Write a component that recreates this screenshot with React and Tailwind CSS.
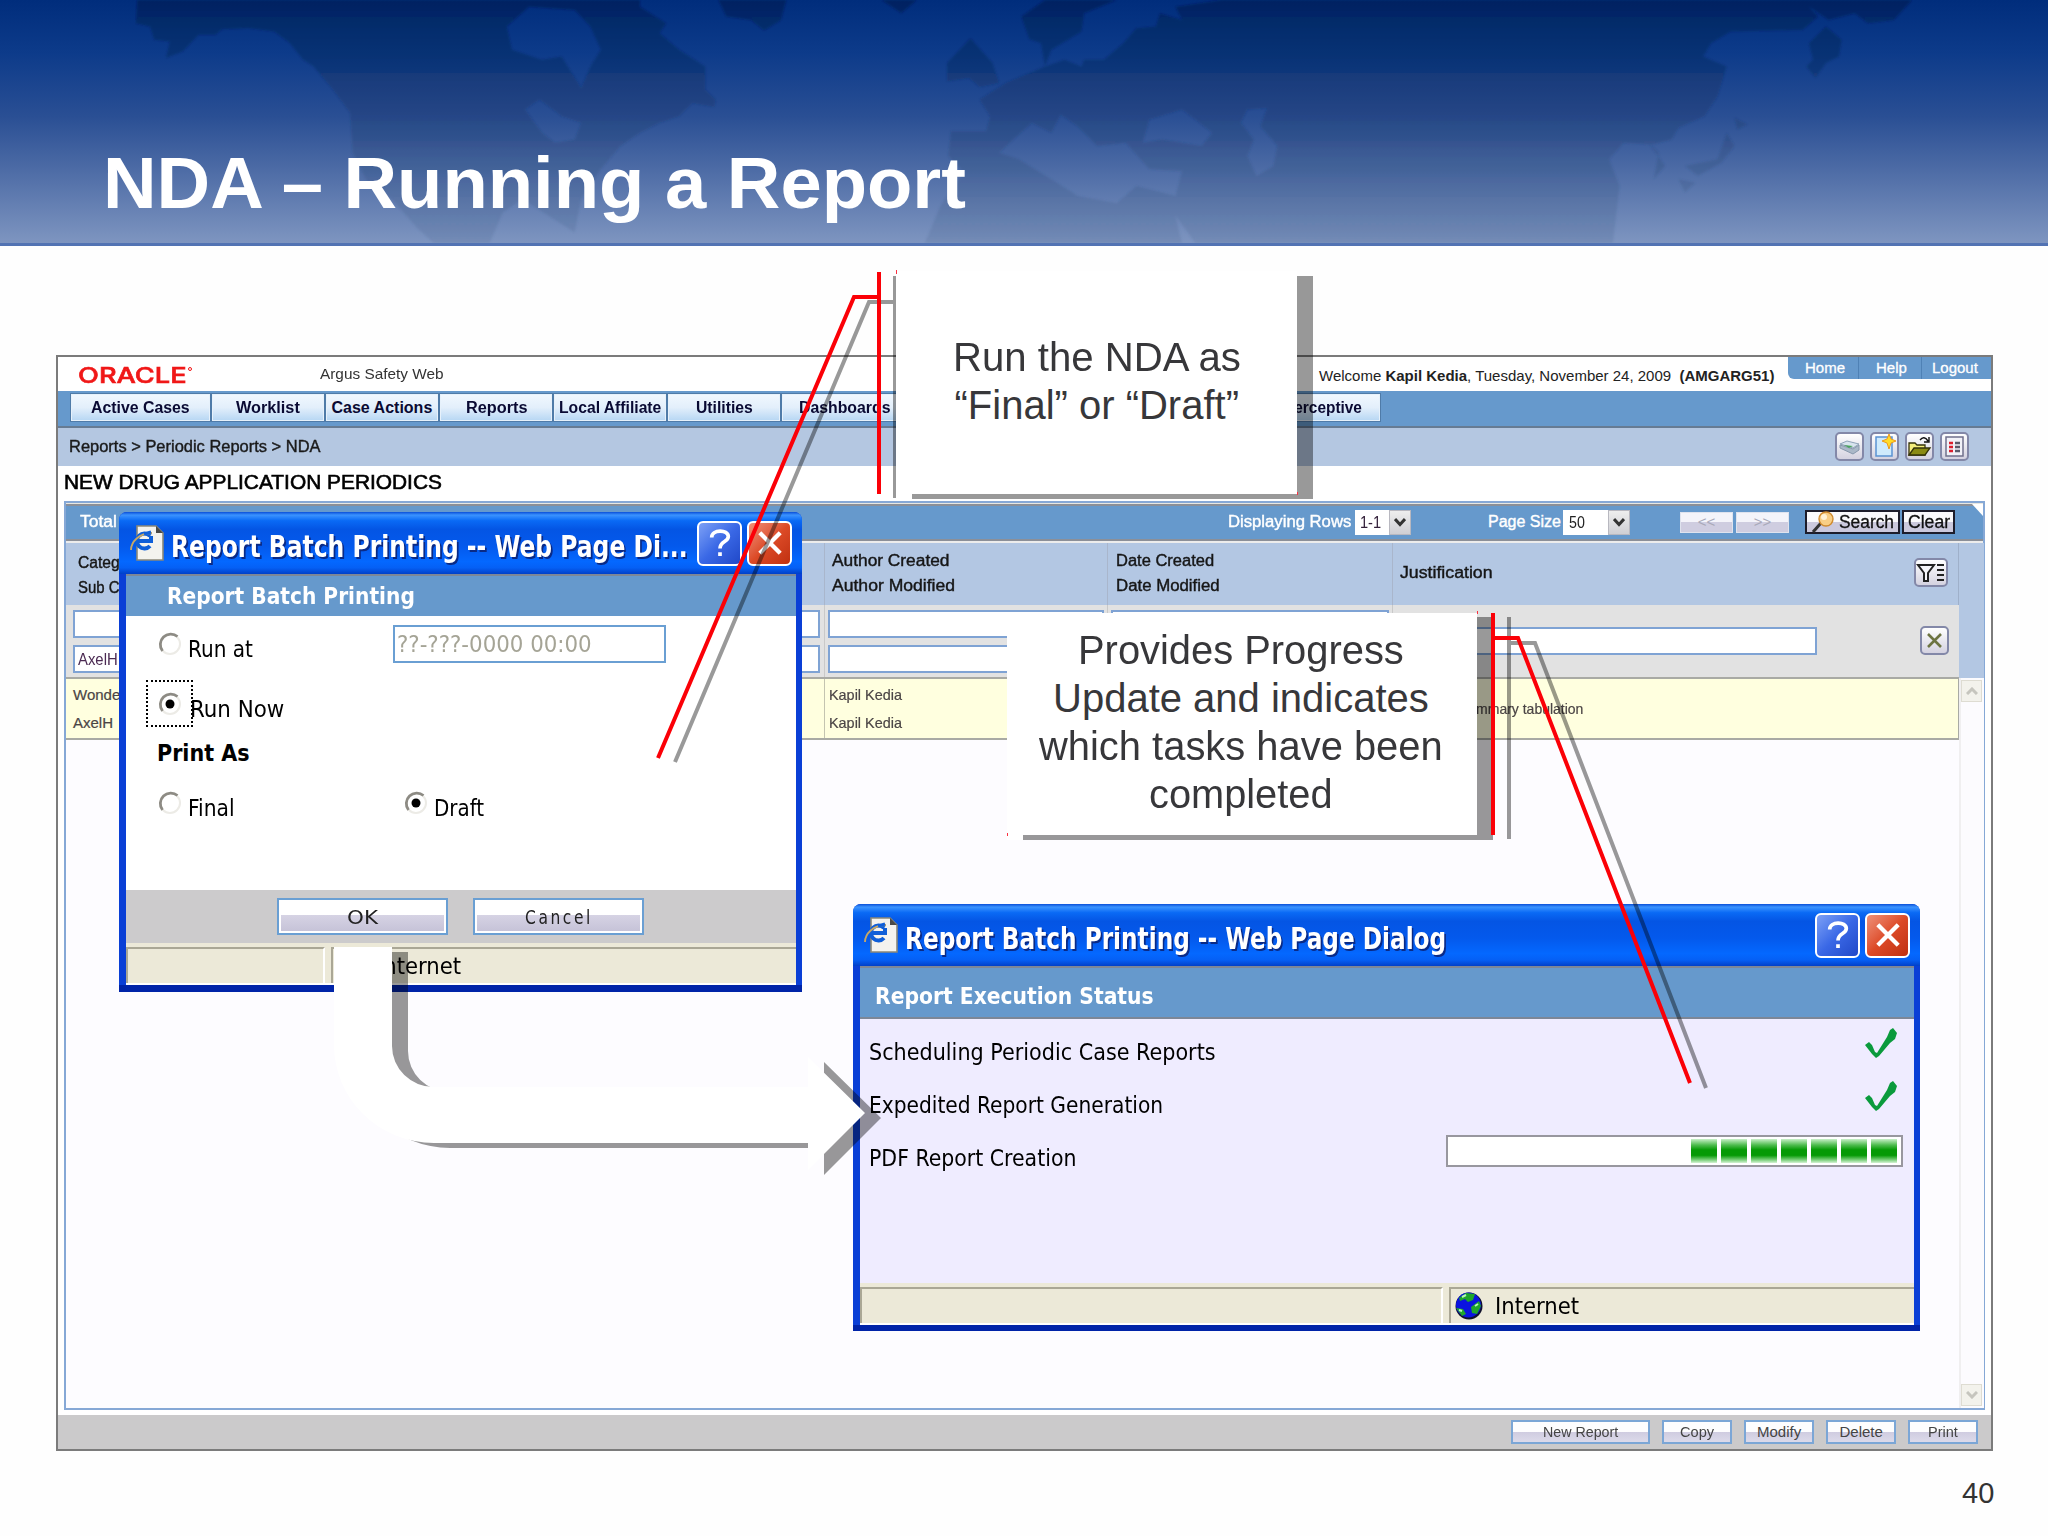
import React, { useLayoutEffect, useRef, useState } from "react";

// Single line label, squeezed or stretched to the width of its box
function Fit({ className = "", children }) {
  const box = useRef(null);
  const text = useRef(null);
  const [scale, setScale] = useState(1);

  useLayoutEffect(() => {
    setScale(box.current.clientWidth / text.current.offsetWidth);
  }, [children]);

  return (
    <span ref={box} className={`block shrink-0 ${className}`}>
      <span
        ref={text}
        className="inline-block whitespace-nowrap origin-left"
        style={{ transform: `scaleX(${scale})` }}
      >
        {children}
      </span>
    </span>
  );
}

const MENU = [
  { label: "Active Cases", box: "w-[139px]", text: "w-[99px]" },
  { label: "Worklist", box: "w-[112px]", text: "w-[64px]" },
  { label: "Case Actions", box: "w-[112px]", text: "w-[101px]" },
  { label: "Reports", box: "w-[112px]", text: "w-[61px]" },
  { label: "Local Affiliate", box: "w-[112px]", text: "w-[102px]" },
  { label: "Utilities", box: "w-[112px]", text: "w-[57px]" },
  { label: "Dashboards", box: "w-[124px]", text: "w-[91px]" },
];

const ACTIONS = [
  { label: "New Report", box: "w-[139px]", text: "w-[75px]" },
  { label: "Copy", box: "w-[70px]", text: "w-[34px]" },
  { label: "Modify", box: "w-[70px]", text: "w-[44px]" },
  { label: "Delete", box: "w-[70px]", text: "w-[43px]" },
  { label: "Print", box: "w-[70px]", text: "w-[30px]" },
];

/* =============================
   Banner
============================== */
function Banner() {
  return (
    <header className="relative h-[246px] border-b-[3px] border-[#5273b3] bg-[linear-gradient(180deg,#002d7c_0%,#0d3b8a_22%,#2a4f94_48%,#4a69a4_68%,#7e95c0_100%)]">
      <svg className="absolute inset-0 w-full h-full" viewBox="0 0 1568 732" preserveAspectRatio="none">
        <defs>
          <linearGradient id="land" x1="0" y1="0" x2="0" y2="732" gradientUnits="userSpaceOnUse">
            <stop offset="0" stopColor="#001848" stopOpacity="0.5" />
            <stop offset="0.5" stopColor="#1c3a6c" stopOpacity="0.33" />
            <stop offset="1" stopColor="#54709a" stopOpacity="0.25" />
          </linearGradient>
          <filter id="soft" x="0" y="0" width="100%" height="100%">
            <feGaussianBlur stdDeviation="1 3" />
          </filter>
        </defs>
        <g fill="url(#land)" fillRule="evenodd" filter="url(#soft)">
          <path d="M105 0L104 70L115 80L118 120L130 125L127 175L140 155L152 105L165 105L170 88L190 84L210 95L222 130L232 180L240 200L255 270L268 340L270 460L280 540L300 600L320 690L332 732H375L385 640L400 600L440 700L445 600L460 510L475 440L490 400L505 370L520 350L530 310L547 322L548 300L540 270V200L520 150L505 100L510 70L490 20V0ZM405 20L388 80L392 150L415 180L430 170L445 265L452 200L460 150L452 80L440 30ZM413 300L402 330L415 400L425 430L440 420L445 370L430 350Z" />
          <path d="M550 0L556 50L575 60L585 92L598 60L602 0ZM675 0L690 40L702 0Z" />
          <path d="M743 115L725 190V245L742 235L750 262L765 250L760 190Z" />
          <path d="M800 0L782 50L788 118L797 130L800 200L770 250L750 300L758 350L755 395L728 395L726 470L738 520L720 620L708 732H905L900 650L915 732H1030L1235 732L1240 560L1232 480L1243 430L1265 435L1280 420L1285 385L1305 350L1315 290L1322 200L1304 170L1310 130L1325 95L1380 90L1392 50L1385 20L1400 60L1420 40L1430 70L1450 60L1464 0H935L900 20L905 60L888 40L885 80L870 85L860 130L845 180L830 180L828 200L815 180L800 200L805 150L828 95L830 40L855 0ZM880 360L905 330L915 360L928 400L920 440L890 420L875 430ZM955 330L970 325L965 380L978 440L975 500L962 530L955 470L960 420L950 370ZM765 460L790 370L805 400L812 345L825 380L840 440L862 430L880 510L905 515L900 590L870 560L855 612L825 590L805 540L780 480Z" />
          <path d="M1398 80L1385 130L1388 180L1383 200L1390 235L1398 190L1408 170L1410 120ZM1328 355L1338 375L1330 390ZM1322 400L1328 440L1318 490L1300 530L1290 500L1315 480ZM1262 430L1270 460L1266 540L1275 500ZM1285 540L1298 550L1290 580Z" />
        </g>
      </svg>
      <h1 className="relative pt-[144px] pl-[103px] text-[73px] leading-[78px] font-bold text-white">
        <Fit className="w-[863px]">NDA – Running a Report</Fit>
      </h1>
    </header>
  );
}

/* =============================
   Argus window
============================== */
function IconButton({ children, className = "w-[29px] h-[29px]" }) {
  return (
    <span
      className={`flex items-center justify-center shrink-0 rounded-[5px] border-2 border-[#8388a8] bg-gradient-to-b from-white to-[#d4d2e0] ${className}`}
    >
      {children}
    </span>
  );
}

function SelectArrow() {
  return (
    <span className="flex w-[22px] h-[25px] items-center justify-center border border-[#b8b8c0] bg-gradient-to-b from-[#eeeeee] to-[#cfcfd4]">
      <svg width="12" height="10" viewBox="0 0 12 10" fill="none" stroke="#333" strokeWidth="3">
        <path d="M1 2L6 7.5L11 2" />
      </svg>
    </span>
  );
}

function TopRow() {
  return (
    <div className="flex h-[34px] bg-white text-[15px] leading-[18px]">
      <div className="flex pt-[7px] pl-[20px] text-[#f01818]">
        <Fit className="w-[109px] text-[22px] leading-[22px] font-medium font-[Inter,sans-serif] [-webkit-text-stroke:0.6px_#f01818]">ORACLE</Fit>
        <span className="w-1 h-1 mt-[3px] ml-px rounded-full border border-[#f01818]" />
      </div>
      <Fit className="w-[124px] mt-[8px] ml-[128px] text-[#333]">Argus Safety Web</Fit>
      <Fit className="w-[455px] mt-[10px] ml-auto mr-[14px] text-[#222]">
        Welcome <b>Kapil Kedia</b>, Tuesday, November 24, 2009&nbsp; <b>(AMGARG51)</b>
      </Fit>
      <div className="flex w-[203px] h-[22px] rounded-bl-[6px] bg-[#6699cc] text-white items-center font-medium [-webkit-text-stroke:0.3px_white]">
        <Fit className="w-[40px] ml-[17px]">Home</Fit>
        <span className="w-px h-full ml-[13px] bg-[#4f81b5]" />
        <Fit className="w-[31px] ml-[17px]">Help</Fit>
        <span className="w-px h-full ml-[14px] bg-[#4f81b5]" />
        <Fit className="w-[46px] ml-[10px]">Logout</Fit>
      </div>
    </div>
  );
}

function MenuButton({ item }) {
  return (
    <span
      className={`flex h-[27px] shrink-0 items-center justify-center border border-[#e6f1fb] bg-gradient-to-b from-[#f0f7fe] via-[#e3effb] to-[#b9d8f4] outline outline-[#4f7ba8] ${item.box}`}
    >
      <Fit className={item.text}>{item.label}</Fit>
    </span>
  );
}

function MenuBar() {
  return (
    <nav className="flex h-[37px] gap-[2px] pt-[3px] pl-[13px] bg-[#6699cc] border-b-2 border-[#667b93] text-[16px] leading-[20px] font-bold text-[#0a0a33]">
      {MENU.map((m) => (
        <MenuButton key={m.label} item={m} />
      ))}
      <div className="ml-[357px]">
        <MenuButton item={{ label: "Perceptive", box: "w-[115px]", text: "w-[78px]" }} />
      </div>
    </nav>
  );
}

function Breadcrumb() {
  return (
    <div className="flex h-[38px] items-center bg-[#b4c7e1] pl-[11px] pr-[22px] text-[16px] text-[#1a1a1a]">
      <Fit className="w-[252px] [-webkit-text-stroke:0.4px_#1a1a1a]">Reports &gt; Periodic Reports &gt; NDA</Fit>
      <div className="flex ml-auto gap-[6px] -mt-px">
        <IconButton>
          <svg width="23" height="18" viewBox="0 0 23 18">
            <path d="M2 6L9 3L21 6L15 10Z" fill="#d8e4ee" stroke="#8fa3b8" />
            <path d="M2 7V10L15 16L21 12V7L15 11Z" fill="#aab8c8" stroke="#8798ac" />
            <path d="M6 7L15 8L11 10Z" fill="#4aa45e" />
          </svg>
        </IconButton>
        <IconButton>
          <svg width="25" height="25" viewBox="0 0 25 25">
            <path d="M4 3H20V22H4Z" fill="#cfeafc" stroke="#5b93d2" strokeWidth="1.5" />
            <path d="M17 0L19 5L24 7L19 9L17 15L15 9L10 7L15 5Z" fill="#ffdc28" stroke="#ef9a1a" />
          </svg>
        </IconButton>
        <IconButton>
          <svg width="25" height="23" viewBox="0 0 25 23">
            <path d="M2 20V8H8L10 10H18V20Z" fill="#f5ee7c" stroke="#35330a" strokeWidth="1.3" />
            <path d="M2 20L7 13H23L18 20Z" fill="#8a8a12" stroke="#35330a" strokeWidth="1.3" />
            <path d="M13 5Q17 0 21 6M22 2V7H17" fill="none" stroke="#111" strokeWidth="1.4" />
          </svg>
        </IconButton>
        <IconButton>
          <svg width="21" height="23" viewBox="0 0 21 23">
            <path d="M2 2H19V21H2Z" fill="#f2f2f8" stroke="#70708c" strokeWidth="1.5" />
            <path d="M5 8H9M5 12H9M5 16H9" stroke="#dc1f2d" strokeWidth="2.6" />
            <path d="M11 8H16M11 12H16M11 16H16" stroke="#5c5c6c" strokeWidth="2.6" />
          </svg>
        </IconButton>
      </div>
    </div>
  );
}

function Pager({ children, className }) {
  return (
    <span
      className={`flex w-[53px] h-[21px] items-center justify-center border border-[#dfe3ee] bg-[linear-gradient(180deg,#f4f4fa_50%,#cfcde0_50%)] text-[#a9a9b9] text-[15px] ${className}`}
    >
      {children}
    </span>
  );
}

function Toolbar() {
  return (
    <div className="relative flex h-[37px] items-center border-t-2 border-b-2 border-[#8b8f98] bg-[#6699cc] pl-[14px] pb-px text-[16px] font-medium text-white">
      <Fit className="w-[37px] [-webkit-text-stroke:0.4px_white]">Total</Fit>
      <Fit className="w-[123px] ml-[1111px] [-webkit-text-stroke:0.4px_white]">Displaying Rows</Fit>
      <span className="flex ml-[4px] bg-white text-[#33203a]">
        <span className="w-[34px] h-[25px] pl-[5px] leading-[25px]">
          <Fit className="w-[21px]">1-1</Fit>
        </span>
        <SelectArrow />
      </span>
      <Fit className="w-[73px] ml-[77px] [-webkit-text-stroke:0.4px_white]">Page Size</Fit>
      <span className="flex ml-[2px] bg-white text-[#222]">
        <span className="w-[45px] h-[25px] pl-[6px] leading-[25px]">
          <Fit className="w-[16px]">50</Fit>
        </span>
        <SelectArrow />
      </span>
      <Pager className="ml-[50px]">&lt;&lt;</Pager>
      <Pager className="ml-[3px]">&gt;&gt;</Pager>
      <span className="flex w-[95px] h-[24px] ml-[16px] items-center border-2 border-[#1d1d2b] bg-[linear-gradient(180deg,#fafafc_50%,#cbc9dd_50%)] pl-1 text-[18px] text-[#111]">
        <svg width="24" height="22" viewBox="0 0 24 22">
          <path d="M2 21L10 12" stroke="#333" strokeWidth="3" />
          <ellipse cx="15" cy="8" rx="7" ry="7" fill="#f8cf86" stroke="#d08b2e" strokeWidth="1.4" />
          <ellipse cx="13" cy="6" rx="3" ry="3" fill="#fff3d6" />
        </svg>
        <Fit className="w-[55px] ml-[4px] [-webkit-text-stroke:0.3px_#111]">Search</Fit>
      </span>
      <span className="flex w-[53px] h-[24px] ml-[2px] items-center justify-center border-2 border-[#1d1d2b] bg-[linear-gradient(180deg,#fafafc_50%,#cbc9dd_50%)] text-[18px] text-[#111]">
        <Fit className="w-[42px] [-webkit-text-stroke:0.3px_#111]">Clear</Fit>
      </span>
      <svg className="absolute right-0 -top-[2px]" width="11" height="12" viewBox="0 0 11 12">
        <path d="M0 0H11V12Z" fill="#fff" />
      </svg>
    </div>
  );
}

function Field({ className = "", children }) {
  return (
    <span className={`block h-[28px] border-2 border-[#7fa3d4] bg-white ${className}`}>{children}</span>
  );
}

function HeadCell({ className, children }) {
  return <div className={`shrink-0 pt-[5px] leading-[25px] border-r border-[#a9b6cc] ${className}`}>{children}</div>;
}

function Grid() {
  return (
    <div className="flex flex-1 min-h-0 bg-[#fdfcff]">
      <div className="w-[1893px] shrink-0">
        {/* column titles */}
        <div className="flex h-[62px] bg-[#b3c7e3] text-[16px] text-[#161616] [-webkit-text-stroke:0.4px_#161616]">
          <HeadCell className="w-[759px] pl-[12px]">
            <div className="pt-[2px]">
              <Fit className="w-[42px]">Categ</Fit>
              <Fit className="w-[41px]">Sub C</Fit>
            </div>
          </HeadCell>
          <HeadCell className="w-[283px] pl-[7px]">
            <Fit className="w-[118px]">Author Created</Fit>
            <Fit className="w-[123px]">Author Modified</Fit>
          </HeadCell>
          <HeadCell className="w-[285px] pl-[8px]">
            <Fit className="w-[98px]">Date Created</Fit>
            <Fit className="w-[104px]">Date Modified</Fit>
          </HeadCell>
          <div className="flex flex-1 items-center pl-[7px] pr-[10px] pb-[3px] border-r border-[#9fb0ca]">
            <Fit className="w-[93px]">Justification</Fit>
            <IconButton className="w-[34px] h-[29px] ml-auto">
              <svg width="30" height="22" viewBox="0 0 30 22" fill="none" stroke="#222" strokeWidth="2">
                <path d="M2 3H18L12 11V19H8V11Z" fill="#f6f6fa" />
                <path d="M21 3H28M21 8H28M21 13H28M21 18H28" />
              </svg>
            </IconButton>
          </div>
        </div>
        {/* filter row */}
        <div className="flex h-[74px] bg-[#e2e2e2] border-b-2 border-[#a9aaa4] text-[16px]">
          <div className="flex flex-col w-[759px] pt-[5px] pl-[7px] pr-[4px] gap-[7px] border-r border-[#c9c9c9]">
            <Field />
            <Field className="pl-[3px] leading-[25px] text-[#4b2a52]">
              <Fit className="w-[40px]">AxelH</Fit>
            </Field>
          </div>
          <div className="flex flex-col w-[283px] pt-[5px] px-[3px] gap-[7px] border-r border-[#c9c9c9]">
            <Field />
            <Field />
          </div>
          <div className="flex flex-col w-[285px] pt-[5px] px-[3px] gap-[7px] border-r border-[#c9c9c9]">
            <Field />
            <Field />
          </div>
          <div className="flex flex-1 items-center pl-1 pr-[10px] pb-px">
            <Field className="w-[420px]" />
            <IconButton className="w-[29px] h-[29px] ml-auto">
              <svg width="17" height="17" viewBox="0 0 17 17" stroke="#6d7442" strokeWidth="2.6">
                <path d="M2 2L15 15M15 2L2 15" />
              </svg>
            </IconButton>
          </div>
        </div>
        {/* data row */}
        <div className="flex h-[61px] bg-[#ffffdf] border-r border-b-2 border-[#a9aaa4] text-[15px] leading-[28px] text-[#4b4545] [-webkit-text-stroke:0.2px_#4b4545]">
          <div className="w-[759px] pt-[2px] pl-[7px] border-r border-[#c4c4b0]">
            <Fit className="w-[47px]">Wonde</Fit>
            <Fit className="w-[40px]">AxelH</Fit>
          </div>
          <div className="w-[283px] pt-[2px] pl-[4px]">
            <Fit className="w-[73px]">Kapil Kedia</Fit>
            <Fit className="w-[73px]">Kapil Kedia</Fit>
          </div>
          <div className="flex items-center ml-[351px]">
            <Fit className="w-[124px]">Summary tabulation</Fit>
          </div>
        </div>
      </div>
      {/* scroll bar */}
      <div className="flex flex-col flex-1">
        <div className="h-[135px] bg-[#b3c7e3]" />
        <div className="flex flex-col flex-1 items-center justify-between py-[2px] pr-[2px] border-l-2 border-[#f0eff0] bg-[#fcfbfe]">
          <span className="flex w-[21px] h-[22px] items-center justify-center border border-[#dedcd2] bg-[#f3f2ec]">
            <svg width="12" height="8" viewBox="0 0 12 8" fill="none" stroke="#c6c5be" strokeWidth="3">
              <path d="M1 7L6 2L11 7" />
            </svg>
          </span>
          <span className="flex w-[21px] h-[22px] items-center justify-center border border-[#dedcd2] bg-[#f3f2ec]">
            <svg width="12" height="8" viewBox="0 0 12 8" fill="none" stroke="#c6c5be" strokeWidth="3">
              <path d="M1 1L6 6L11 1" />
            </svg>
          </span>
        </div>
      </div>
    </div>
  );
}

function ArgusWindow() {
  return (
    <section className="flex flex-col w-[1937px] h-[1096px] mt-[109px] ml-[56px] border-2 border-[#7b7b7b] bg-white">
      <TopRow />
      <MenuBar />
      <Breadcrumb />
      <div className="flex h-[35px] items-center pl-[6px] pb-[4px] text-[20px] text-black [-webkit-text-stroke:0.6px_black]">
        <Fit className="w-[378px]">NEW DRUG APPLICATION PERIODICS</Fit>
      </div>
      <div className="flex flex-col w-[1921px] h-[909px] ml-[6px] border-2 border-[#86a8d6] bg-[#e7e7e2] pt-px">
        <Toolbar />
        <div className="h-[2px] shrink-0 bg-[#ececec]" />
        <Grid />
      </div>
      <footer className="flex flex-1 mt-[5px] pr-[13px] items-center justify-end gap-3 bg-[#cbcacb] text-[15px] text-[#444]">
        {ACTIONS.map((a) => (
          <span
            key={a.label}
            className={`flex h-[24px] items-center justify-center border-2 border-[#7ba6d6] bg-[linear-gradient(180deg,#fdfdfe_50%,#cfcce0_50%,#dcdaea_100%)] ${a.box}`}
          >
            <Fit className={a.text}>{a.label}</Fit>
          </span>
        ))}
      </footer>
    </section>
  );
}

/* =============================
   XP dialogs
============================== */
function PageIcon() {
  return (
    <svg className="shrink-0" width="36" height="36" viewBox="0 0 36 36">
      <path d="M7 1H26L33 8V35H7Z" fill="#f4f3ee" stroke="#8a8878" strokeWidth="1.6" />
      <path d="M26 1V8H33Z" fill="#4a4a48" />
      <path d="M20 11A7.500 7.500 0 1 0 20 21M7 16H21V11" fill="none" stroke="#0f5fd8" strokeWidth="4" />
      <path d="M1 25C1 17 9 8 22 8" fill="none" stroke="#c7a866" strokeWidth="1.800" />
      <path d="M14 9L21 7" stroke="#0f5fd8" strokeWidth="3" />
    </svg>
  );
}

function Globe() {
  return (
    <svg className="shrink-0" width="28" height="28" viewBox="0 0 28 28">
      <circle cx="14" cy="14" r="13.500" fill="#10102c" />
      <circle cx="13.500" cy="13" r="12.500" fill="#0a12e0" />
      <path d="M4 6L11 1L20 2L18 8L13 10L10 7L5 9Z M16 15L24 9L26 14L22 22L17 21Z M1 16L8 17L11 22L7 24Z" fill="#1fa52b" />
      <path d="M7 5L11 3M20 14L23 12M4 18L7 19" stroke="#b8f5b8" strokeWidth="2" />
    </svg>
  );
}

function TitleBar({ children, className }) {
  return (
    <div
      className={`flex h-[62px] items-center rounded-t-[8px] bg-[linear-gradient(180deg,#0a4fd8_0%,#3b93ff_5%,#0a6af5_14%,#0455e4_28%,#0459ec_55%,#0468ff_80%,#0560f5_90%,#0140c8_100%)] ${className}`}
    >
      <PageIcon />
      <div className="flex flex-1 pt-[7px] text-[30px] leading-[40px] font-bold text-white [text-shadow:2px_2px_0_#0a2a86] font-['DejaVu_Sans_Condensed','DejaVu_Sans',sans-serif]">
        {children}
      </div>
      <span className="flex w-[45px] h-[45px] items-center justify-center rounded-[6px] border-2 border-white bg-gradient-to-br from-[#7ea0f5] via-[#3a68e6] to-[#2148c8]">
        <svg width="24" height="32" viewBox="0 0 26 32" fill="none" stroke="#fff" strokeWidth="4">
          <path d="M4 10C4 1 22 1 22 9C22 15 13 14 13 22M13 26V30" />
        </svg>
      </span>
      <span className="flex w-[45px] h-[45px] ml-[5px] items-center justify-center rounded-[6px] border-2 border-white bg-gradient-to-br from-[#ee9078] via-[#dc4a26] to-[#c03010]">
        <svg width="26" height="26" viewBox="0 0 28 28" stroke="#fff" strokeWidth="4.600">
          <path d="M3 3L25 25M25 3L3 25" />
        </svg>
      </span>
    </div>
  );
}

function StatusBar({ left }) {
  return (
    <div className="flex h-[42px] gap-[6px] pt-[4px] border-b-2 border-white bg-[#ece9d8] text-[23px] leading-[34px]">
      <span className={`border-t-2 border-l-2 border-r-2 border-t-[#aaa795] border-l-[#aaa795] border-r-white ${left}`} />
      <span className="flex flex-1 items-center pl-[4px] border-t-2 border-l-2 border-[#aaa795]">
        <Globe />
        <Fit className="w-[84px] ml-[12px]">Internet</Fit>
      </span>
    </div>
  );
}

function Radio({ checked }) {
  return (
    <svg className="shrink-0" width="24" height="24" viewBox="0 0 24 24" fill="none">
      <circle cx="12" cy="12" r="10" stroke="#ecebe6" strokeWidth="2" />
      <path d="M4.500 19A10.500 10.500 0 0 1 19.500 4.500" stroke="#8d8b84" strokeWidth="2.800" />
      {checked && <circle cx="12" cy="12" r="4.500" fill="#000" />}
    </svg>
  );
}

function PushButton({ children }) {
  return (
    <span className="flex w-[171px] h-[37px] items-center justify-center border-2 border-[#6a9fd3] bg-white p-[2px] text-[20px] text-[#222]">
      <span className="flex w-full h-full items-center justify-center bg-[linear-gradient(180deg,#ffffff_45%,#d6d3e4_45%,#c6c3d8_100%)]">
        {children}
      </span>
    </span>
  );
}

function PrintDialog() {
  return (
    <div className="absolute left-[119px] top-[512px] w-[683px] h-[480px] rounded-t-[8px] bg-[#0a3fd6] border-b-[7px] border-[#0024a8] text-black font-['DejaVu_Sans_Condensed','DejaVu_Sans',sans-serif]">
      <TitleBar className="pl-[11px] pr-[10px]">
        <Fit className="w-[517px] ml-[5px]">Report Batch Printing -- Web Page Di...</Fit>
      </TitleBar>
      <div className="ml-[7px] mr-[6px] bg-white text-[23px] leading-[28px]">
        <div className="flex h-[42px] items-center pl-[41px] border-t-2 border-[#7d8797] bg-[#6699cc] font-bold text-white">
          <Fit className="w-[248px]">Report Batch Printing</Fit>
        </div>
        <div className="h-[274px] pt-[9px]">
          <div className="flex h-[38px] pl-[32px]">
            <div className="pt-[7px]"><Radio /></div>
            <Fit className="w-[65px] mt-[10px] ml-[6px]">Run at</Fit>
            <span className="flex w-[273px] h-[38px] ml-[140px] pl-[2px] items-center border-2 border-[#6a9fd3] text-[#a5a496]">
              <Fit className="w-[195px]">??-???-0000 00:00</Fit>
            </span>
          </div>
          <div className="flex h-[47px] mt-[17px] pl-[20px]">
            <span className="flex w-[47px] h-[47px] items-center justify-center border-2 border-dotted border-black">
              <Radio checked />
            </span>
            <Fit className="w-[94px] mt-[15px] -ml-[3px]">Run Now</Fit>
          </div>
          <Fit className="w-[93px] mt-[12px] ml-[31px] font-bold">Print As</Fit>
          <div className="flex mt-[24px] pl-[32px]">
            <Radio />
            <Fit className="w-[47px] mt-[3px] ml-[6px]">Final</Fit>
            <div className="ml-[169px]"><Radio checked /></div>
            <Fit className="w-[50px] mt-[3px] ml-[6px]">Draft</Fit>
          </div>
        </div>
        <div className="flex h-[53px] pt-[8px] pl-[151px] gap-[25px] bg-[#cccbcc]">
          <PushButton><Fit className="w-[31px]">OK</Fit></PushButton>
          <PushButton><Fit className="w-[68px] tracking-[3px]">Cancel</Fit></PushButton>
        </div>
        <StatusBar left="w-[199px]" />
      </div>
    </div>
  );
}

function Check() {
  return (
    <svg width="32" height="30" viewBox="0 0 32 30">
      <path d="M0 17L4 14L7 17L10 24L12 25L22 9L25 2L28 0L32 5L30 11L25 15L14 28L11 30L7 26Z" fill="#0a9a3c" />
    </svg>
  );
}

function StatusDialog() {
  return (
    <div className="absolute left-[853px] top-[904px] w-[1067px] h-[427px] rounded-t-[8px] bg-[#0a3fd6] border-b-[6px] border-[#0024a8] text-black font-['DejaVu_Sans_Condensed','DejaVu_Sans',sans-serif]">
      <TitleBar className="pl-[11px] pr-[10px]">
        <Fit className="w-[541px] ml-[5px]">Report Batch Printing -- Web Page Dialog</Fit>
      </TitleBar>
      <div className="ml-[7px] mr-[6px] bg-[#efecff] text-[23px] leading-[28px]">
        <div className="flex h-[53px] pt-[6px] items-center pl-[15px] border-t-2 border-b-2 border-[#7d8797] bg-[#6699cc] font-bold text-white">
          <Fit className="w-[279px]">Report Execution Status</Fit>
        </div>
        <div className="h-[264px] pt-[4px] pl-[9px] pr-[11px]">
          <div className="flex h-[53px] items-center">
            <Fit className="w-[347px] mt-[5px]">Scheduling Periodic Case Reports</Fit>
            <div className="ml-auto mr-[6px] -mt-[14px]"><Check /></div>
          </div>
          <div className="flex h-[53px] items-center">
            <Fit className="w-[294px] mt-[5px]">Expedited Report Generation</Fit>
            <div className="ml-auto mr-[6px] -mt-[14px]"><Check /></div>
          </div>
          <div className="flex h-[53px] items-center">
            <Fit className="w-[207px] mt-[5px]">PDF Report Creation</Fit>
            <div className="flex w-[457px] h-[32px] ml-auto -mt-[10px] items-center justify-end gap-[4px] pr-[4px] border-2 border-[#98979f] bg-white">
              {[1, 2, 3, 4, 5, 6, 7].map((n) => (
                <span
                  key={n}
                  className="w-[26px] h-[24px] bg-[linear-gradient(180deg,#c9efc9_0%,#4fbc4f_25%,#069a06_45%,#069a06_68%,#6fca6f_85%,#d4f3d4_100%)]"
                />
              ))}
            </div>
          </div>
        </div>
        <StatusBar left="w-[583px]" />
      </div>
    </div>
  );
}

/* =============================
   Annotations
============================== */
function Annotations() {
  return (
    <>
      <svg className="absolute inset-0" width="2048" height="1536" viewBox="0 0 2048 1536" fill="none">
        {/* flow arrow */}
        <path transform="translate(16 5)" fill="#000" fillOpacity="0.4" d="M334 947H392V1046A42 41 0 0 0 434 1087H808V1057L865 1113L808 1170V1143H434A100 98 0 0 1 334 1045Z" />
        <path fill="#fff" d="M334 947H392V1046A42 41 0 0 0 434 1087H808V1057L865 1113L808 1170V1143H434A100 98 0 0 1 334 1045Z" />
        {/* callout shadows */}
        <g fill="#000" fillOpacity="0.4">
          <path d="M912 276H1313V499H912Z" />
          <path d="M1023 617H1493V840H1023Z" />
        </g>
        <g stroke="#000" strokeOpacity="0.4" strokeWidth="4">
          <path d="M895 276V498M893 302H869L675 762" />
          <path d="M1509 617V839M1511 643H1535L1706 1088" />
        </g>
        <path d="M896 271H1297V494H912V499H896Z" fill="#fff" />
        <path d="M1007 613H1477V835H1023V840H1007Z" fill="#fff" />
        <g stroke="#fb0007" strokeWidth="4">
          <path d="M879 272V494M879 297H854L658 758" />
          <path d="M1493 613V835M1493 638H1518L1690 1083" />
        </g>
        <g fill="#fb3040">
          <path d="M896 270H897V274H896ZM1297 492H1298V495H1297ZM1477 611H1478V614H1477ZM1007 833H1008V836H1007Z" />
        </g>
      </svg>
      <div className="absolute left-[896px] top-[273px] flex flex-col w-[401px] h-[221px] pt-[60px] items-center text-[40px] leading-[48px] text-[#37373a]">
        <Fit className="w-[288px]">Run the NDA as</Fit>
        <Fit className="w-[284px]">“Final” or “Draft”</Fit>
      </div>
      <div className="absolute left-[1006px] top-[613px] flex flex-col w-[470px] h-[222px] pt-[13px] items-center text-[40px] leading-[48px] text-[#37373a]">
        <Fit className="w-[326px]">Provides Progress</Fit>
        <Fit className="w-[376px]">Update and indicates</Fit>
        <Fit className="w-[404px]">which tasks have been</Fit>
        <Fit className="w-[184px]">completed</Fit>
      </div>
    </>
  );
}

export default function App() {
  return (
    <div className="relative w-[2048px] h-[1536px] overflow-hidden bg-[#fefefe] font-['Liberation_Sans',Arial,sans-serif]">
      <Banner />
      <ArgusWindow />
      <div className="flex justify-end pt-[25px] pr-[54px] text-[29px] leading-[34px] text-[#333]">
        <Fit className="w-[32px]">40</Fit>
      </div>
      <PrintDialog />
      <StatusDialog />
      <Annotations />
    </div>
  );
}
